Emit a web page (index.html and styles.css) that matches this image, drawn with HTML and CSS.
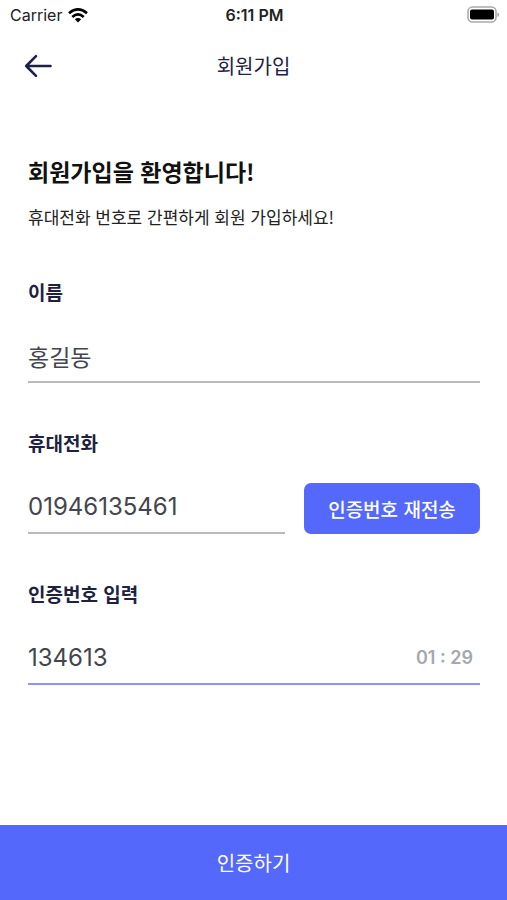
FILE: index.html
```html
<!DOCTYPE html>
<html lang="ko">
<head>
<meta charset="utf-8">
<meta name="viewport" content="width=device-width, initial-scale=1">
<title>회원가입</title>
<link rel="stylesheet" href="styles.css">
</head>
<body>
<div class="status">
  <div class="carrier">
    <span>Carrier</span>
    <svg width="20" height="15" viewBox="0 0 20 15" aria-hidden="true">
      <g fill="none" stroke="#000" stroke-width="2.7">
        <path d="M1 5.2Q10-2.4 19 5.2"/>
        <path d="M4.3 8.9Q10 3.9 15.7 8.9"/>
      </g>
      <path d="M6.8 11.3Q10 8.6 13.2 11.3L10 14.6Z"/>
    </svg>
  </div>
  <span class="clock">6:11 PM</span>
  <svg class="battery" width="32" height="18" viewBox="0 0 32 18" aria-hidden="true">
    <rect x="1" y="1" width="28" height="15" rx="4.5" fill="#fff" stroke="#aaa" stroke-width="1.6"/>
    <rect x="3" y="3.5" width="24" height="10" rx="2"/>
    <path d="M30.500 6.500Q32 7 32 8.700T30.500 11Z" fill="#999"/>
  </svg>
</div>
<header class="header">
  <button class="back" type="button" aria-label="뒤로">
    <svg width="28" height="24" viewBox="0 0 28 24" aria-hidden="true">
      <path d="M12 2.200L2.200 12L12 21.800M2.200 12H26.500" fill="none" stroke="#1e2147" stroke-width="2.600" stroke-linecap="round" stroke-linejoin="round"/>
    </svg>
  </button>
  <span class="title">회원가입</span>
</header>
<form class="form">
  <main class="content">
    <h1 class="welcome">회원가입을 환영합니다!</h1>
    <p class="intro">휴대전화 번호로 간편하게 회원 가입하세요!</p>
    <div class="field">
      <label for="name">이름</label>
      <div class="row"><input class="input hangul" id="name" type="text" value="홍길동"></div>
    </div>
    <div class="field">
      <label for="phone">휴대전화</label>
      <div class="row">
        <input class="input" id="phone" type="tel" value="01946135461">
        <button class="resend" type="button">인증번호 재전송</button>
      </div>
    </div>
    <div class="field">
      <label for="code">인증번호 입력</label>
      <div class="row active">
        <input class="input" id="code" type="text" inputmode="numeric" value="134613">
        <span class="timer">01 : 29</span>
      </div>
    </div>
  </main>
  <button class="submit" type="submit">인증하기</button>
</form>
</body>
</html>
```
FILE: styles.css
```css
* {
  box-sizing: border-box;
}

body {
  display: flex;
  flex-direction: column;
  min-height: 100vh;
  margin: 0;
  background: #fff;
  color: #1e2140;
  font-family: Inter, "Noto Sans CJK KR", sans-serif;
}

button,
input {
  margin: 0;
  padding: 0;
  border: 0;
  border-radius: 0;
  background: none;
  font-family: inherit;
}

.status {
  display: grid;
  grid-template-columns: 1fr auto 1fr;
  align-items: center;
  height: 30px;
  padding: 0 8px 0 10px;
  color: #222;
  font-size: 16px;
}

.carrier {
  display: flex;
  align-items: center;
  gap: 6px;
}

.clock {
  font-weight: 600;
}

.battery {
  justify-self: end;
}

.header {
  display: grid;
  grid-template-columns: 1fr auto 1fr;
  align-items: center;
  height: 72px;
  padding: 0 24px;
}

.back {
  display: flex;
  justify-self: start;
}

.title {
  font: 400 20px/28px "Noto Sans CJK KR", sans-serif;
}

.form {
  display: flex;
  flex: 1;
  flex-direction: column;
}

.content {
  flex: 1;
  padding: 51px 27px 40px 28px;
}

.welcome {
  margin: 0;
  color: #111;
  font: 700 23px/36px "Noto Sans CJK KR", sans-serif;
}

.intro {
  margin: 13px 0 0;
  color: #222;
  font: 400 17px/30px "Noto Sans CJK KR", sans-serif;
}

.field {
  display: flex;
  flex-direction: column;
  gap: 24px;
  margin-top: 46px;
}

.field label {
  font: 700 19px/28px "Noto Sans CJK KR", sans-serif;
}

.row {
  display: flex;
  gap: 19px;
  height: 53px;
}

.input {
  flex: 1;
  min-width: 0;
  border-bottom: 2px solid #b9babd;
  outline: 0;
  color: #44454d;
  font-size: 24px;
}

.hangul {
  font-size: 23px;
}

.active {
  border-bottom: 2px solid #8a94f3;
}

.active .input {
  border-bottom: 0;
}

.timer {
  align-self: center;
  padding-right: 7px;
  color: #a5a8ae;
  font-size: 18px;
  font-weight: 600;
}

.resend {
  align-self: flex-end;
  width: 176px;
  height: 51px;
  border-radius: 7px;
  background: #5468fc;
  color: #fff;
  font: 500 19px/28px "Noto Sans CJK KR", sans-serif;
}

.submit {
  height: 75px;
  background: #5468fc;
  color: #fff;
  font: 400 20px/28px "Noto Sans CJK KR", sans-serif;
}
```
